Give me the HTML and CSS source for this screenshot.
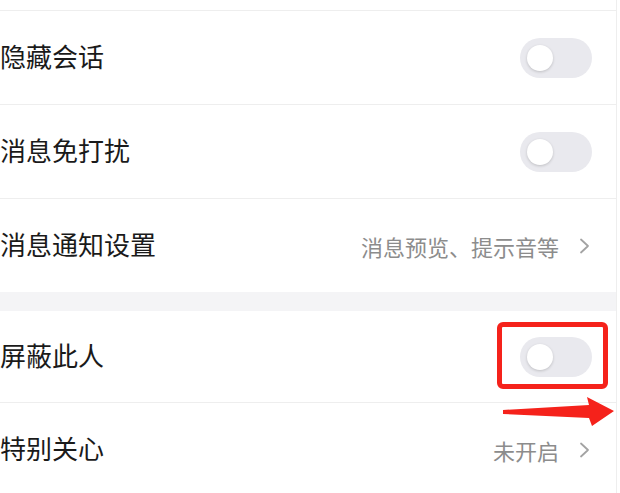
FILE: index.html
```html
<!DOCTYPE html>
<html>
<head>
  <title>聊天设置</title>
  <link rel="stylesheet" href="styles.css">
</head>
<body>
  <div class="settings">
    <div class="stub"></div>

    <div class="row">
      <span class="label">隐藏会话</span>
      <div class="switch"><span class="knob"></span></div>
    </div>

    <div class="row">
      <span class="label">消息免打扰</span>
      <div class="switch"><span class="knob"></span></div>
    </div>

    <div class="row last">
      <span class="label">消息通知设置</span>
      <div class="detail">
        <span class="hint">消息预览、提示音等</span>
        <svg class="chevron" width="12" height="16" viewBox="0 0 12 16">
          <polyline points="2,1.5 9,8 2,14.5" fill="none" stroke="#a3a3a3" stroke-width="1.8" stroke-linecap="round" stroke-linejoin="round"/>
        </svg>
      </div>
    </div>

    <div class="gap"></div>

    <div class="row block">
      <span class="label">屏蔽此人</span>
      <div class="switch">
        <span class="knob"></span>
        <div class="mark"></div>
      </div>
    </div>

    <div class="row last">
      <span class="label">特别关心</span>
      <div class="detail">
        <span class="hint">未开启</span>
        <svg class="chevron" width="12" height="16" viewBox="0 0 12 16">
          <polyline points="2,1.5 9,8 2,14.5" fill="none" stroke="#a3a3a3" stroke-width="1.8" stroke-linecap="round" stroke-linejoin="round"/>
        </svg>
      </div>
    </div>

    <!-- annotation arrow pointing at the switch -->
    <svg class="arrow" width="120" height="36" viewBox="0 0 120 36">
      <polygon points="3,16 89,11 87,3 114,17 92,32 89,24 3,20" fill="#f5221b"/>
    </svg>
  </div>
</body>
</html>
```

FILE: styles.css
```css
body {
  margin: 0;
  background: #ffffff;
  font-family: "Noto Sans CJK SC", "Noto Sans", sans-serif;
}

.settings {
  position: relative;
  width: 616px;
  border-right: 1px solid #eeeeee;
  overflow: hidden;
}

.stub {
  height: 10px;
  border-bottom: 1px solid #eeeeee;
}

.row {
  display: flex;
  align-items: center;
  justify-content: space-between;
  height: 93px;
  padding-right: 24px;
  border-bottom: 1px solid #eeeeee;
}

.row.last {
  border-bottom: none;
}

.row.block {
  height: 91px;
}

.label {
  font-size: 26px;
  line-height: 30px;
  margin-bottom: 3px;
  color: #1a1a1a;
}

.gap {
  height: 19px;
  background: #f4f4f6;
}

.switch {
  position: relative;
  width: 72px;
  height: 40px;
  border-radius: 20px;
  background: #e9e9ee;
}

.knob {
  position: absolute;
  left: 7px;
  top: 7px;
  width: 26px;
  height: 26px;
  border-radius: 50%;
  background: #ffffff;
  box-shadow: 0 1px 3px rgba(0, 0, 0, 0.18);
}

.mark {
  position: absolute;
  left: -23px;
  top: -15px;
  width: 111px;
  height: 67px;
  box-sizing: border-box;
  border: 5px solid #f5221b;
  border-radius: 6px;
}

.detail {
  display: flex;
  align-items: center;
  gap: 20px;
  margin-right: 1px;
}

.hint {
  font-size: 22px;
  color: #8c8c8c;
}

.chevron {
  display: block;
}

.arrow {
  position: absolute;
  left: 500px;
  top: 394px;
}
```
